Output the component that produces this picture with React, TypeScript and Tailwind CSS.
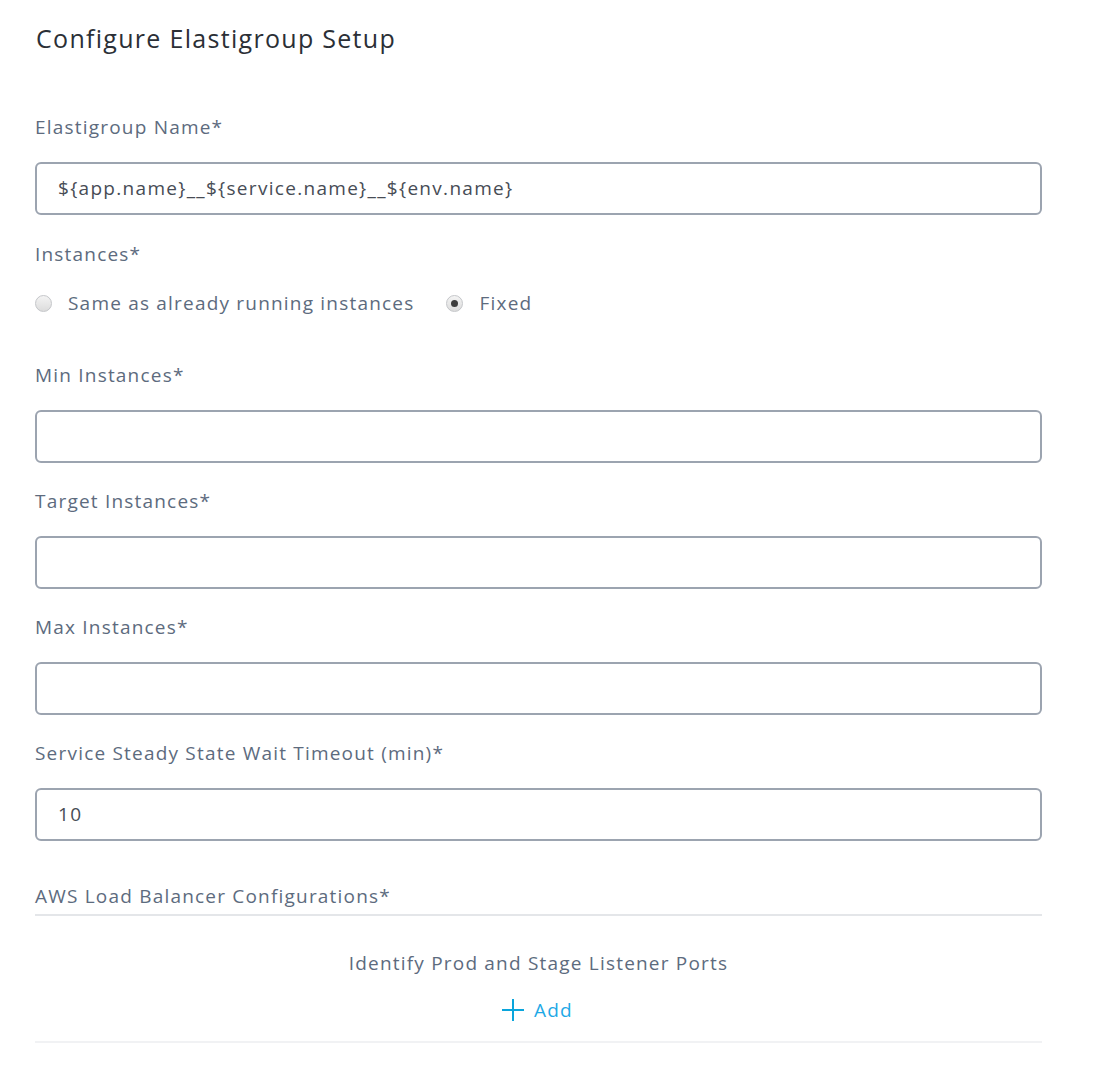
const font = { fontFamily: "'Open Sans', Lato, sans-serif" };

const Label = ({ text, className = "" }: { text: string; className?: string }) => (
    <div className={`text-[19px] leading-[24px] tracking-[1.2px] text-[#5d6b7e] ${className}`}>{text}</div>
);

const Input = ({ value = "" }: { value?: string }) => (
    <div className="mt-[23px] h-[53px] border-2 border-[#9ca4b0] rounded-[6px] flex items-center px-[21px] text-[19px] tracking-[1.3px] text-[#474c55]">
        {value}
    </div>
);

const Radio = ({ checked, label }: { checked?: boolean; label: string }) => (
    <label className="flex items-center gap-[16px]">
        <span className="w-[17px] h-[17px] rounded-full border border-[#c4c6c9] bg-gradient-to-b from-[#f4f4f4] to-[#dcdcdc] flex items-center justify-center">
            {checked ? <span className="w-[7px] h-[7px] rounded-full bg-[#3d3d3d]" /> : null}
        </span>
        <span className="text-[19px] tracking-[1.2px] text-[#5d6b7e]">{label}</span>
    </label>
);

export default function App() {
    return (
        <div className="bg-white min-h-[1076px] w-[1098px]" style={font}>
            <div className="pl-[35px] w-[1042px] pt-[22px]">
                <h1 className="text-[25px] leading-[32px] tracking-[1.3px] text-[#2b2f36] pl-[1px]">Configure Elastigroup Setup</h1>

                <Label text="Elastigroup Name*" className="mt-[61px]" />
                <Input value="${app.name}__${service.name}__${env.name}" />

                <Label text="Instances*" className="mt-[27px]" />
                <div className="mt-[25px] flex items-center gap-[32px] h-[24px]">
                    <Radio label="Same as already running instances" />
                    <Radio checked label="Fixed" />
                </div>

                <Label text="Min Instances*" className="mt-[48px]" />
                <Input />

                <Label text="Target Instances*" className="mt-[26px]" />
                <Input />

                <Label text="Max Instances*" className="mt-[26px]" />
                <Input />

                <Label text="Service Steady State Wait Timeout (min)*" className="mt-[26px]" />
                <Input value="10" />

                <Label text="AWS Load Balancer Configurations*" className="mt-[43px]" />
                <div className="mt-[6px] h-[2px] bg-[#e4e6e9]" />

                <div className="mt-[35px] text-center text-[19px] leading-[24px] tracking-[1.2px] text-[#5d6b7e]">
                    Identify Prod and Stage Listener Ports
                </div>
                <div className="mt-[23px] flex justify-center">
                    <button className="flex items-center gap-[10px] text-[19px] leading-[24px] tracking-[1.2px] text-[#1fa9e6] pr-[2px]">
                        <svg width="22" height="22" viewBox="0 0 22 22" className="text-[#0aa5dc]">
                            <path d="M11 0v22M0 11h22" stroke="currentColor" strokeWidth="2" fill="none" />
                        </svg>
                        Add
                    </button>
                </div>
                <div className="mt-[19px] h-[2px] bg-[#f1f2f4]" />
            </div>
        </div>
    );
}
